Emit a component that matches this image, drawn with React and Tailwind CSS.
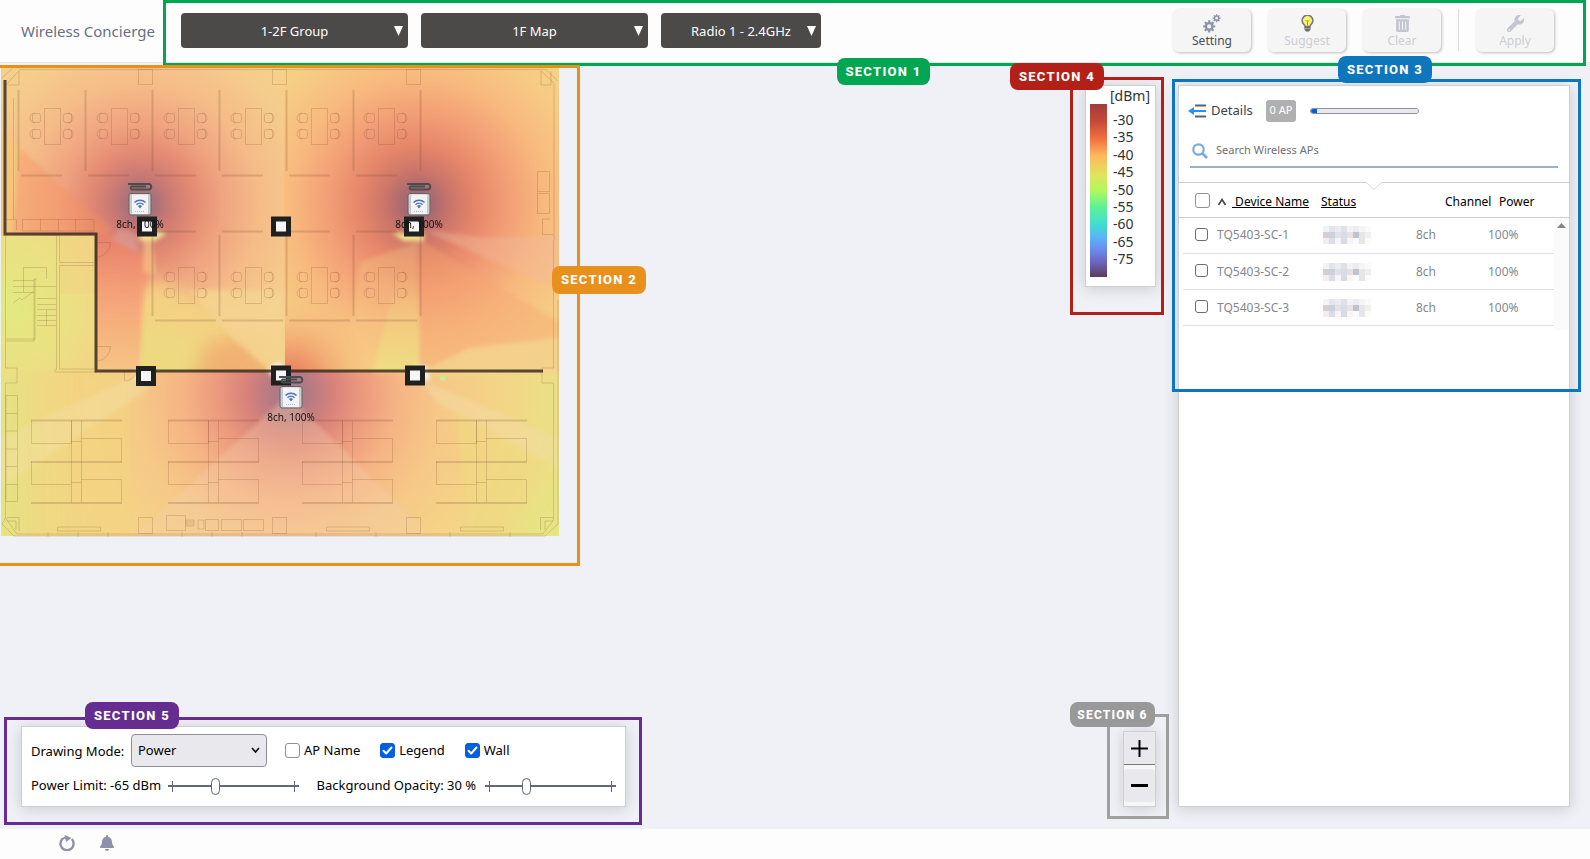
import { useState } from 'react';
import { FaBell, FaTrashAlt, FaWrench } from 'react-icons/fa';

const PANEL = 'bg-white border border-[#cfcfd2] shadow-[0_2px_14px_rgba(0,0,0,0.16)]';

const AP_ROWS = [
  { name: 'TQ5403-SC-1', channel: '8ch', power: '100%' },
  { name: 'TQ5403-SC-2', channel: '8ch', power: '100%' },
  { name: 'TQ5403-SC-3', channel: '8ch', power: '100%' },
];

const LEVELS = [-30, -35, -40, -45, -50, -55, -60, -65, -75];

const MOSAIC = [
  '#eef5f8', '#e4e5ea', '#ececf0', '#dfe1e8', '#f3f3f5', '#ececee', '#f5f5f7', '#fafafa',
  '#d6cfd2', '#cdd0da', '#e0e2ea', '#d8dce8', '#e8e0e3', '#c0c2cf', '#e4e6ea', '#efefec',
  '#f3edf0', '#d9dde9', '#f8f4f3', '#d8dbe6', '#faf3f2', '#f8fcff', '#e6e6e9', '#fdfdf8',
];

function Callout({ className, labelClass, children }) {
  return (
    <div className={`absolute pointer-events-none border-3 ${className}`}>
      <span className={`absolute flex items-center justify-center rounded-lg font-['Roboto',sans-serif] font-extrabold tracking-widest whitespace-nowrap text-white ${labelClass}`}>
        {children}
      </span>
    </div>
  );
}

function HeaderSelect({ label, value, className }) {
  return (
    <div className={`relative ${className}`}>
      <select aria-label={label} className="block w-full h-[35px] appearance-none rounded-sm bg-[#4b4a48] pt-[2px] text-center text-[13px] text-white">
        <option>{value}</option>
      </select>
      <svg className="absolute right-[5px] top-[13px] w-[9px] h-[10px] pointer-events-none" viewBox="0 0 9 10">
        <path d="M0 0h9L4.500 10z" fill="#fff" />
      </svg>
    </div>
  );
}

function ToolButton({ icon, children, disabled }) {
  return (
    <button
      type="button"
      disabled={disabled}
      className={`flex flex-col items-center w-[78px] h-[43px] pt-1 rounded-md bg-[#f5f5f5] shadow-[1px_1px_3px_rgba(0,0,0,0.25)] text-xs ${disabled ? 'text-[#cdced3]' : 'text-[#4a4e5a]'}`}
    >
      <span className="flex items-center h-5">{icon}</span>
      <span className="leading-4">{children}</span>
    </button>
  );
}

function gearPath(cx, cy, r, teeth) {
  const pts = [];
  const step = (Math.PI * 2) / teeth;
  for (let i = 0; i < teeth; i++) {
    const a = i * step;
    [[-0.34, 0.72], [-0.2, 1], [0.2, 1], [0.34, 0.72]].forEach(([t, k]) => {
      pts.push(`${(cx + Math.cos(a + t * step) * r * k).toFixed(2)} ${(cy + Math.sin(a + t * step) * r * k).toFixed(2)}`);
    });
  }
  const h = r * 0.34;
  return `M${pts.join('L')}ZM${cx - h} ${cy}a${h} ${h} 0 1 0 ${h * 2} 0a${h} ${h} 0 1 0 ${-h * 2} 0Z`;
}

function GearsIcon() {
  return (
    <svg width="18" height="19" viewBox="0 0 18 19" fill="#8f93a8" fillRule="evenodd">
      <path d={gearPath(6.2, 12.4, 6.2, 8)} />
      <path d={gearPath(13.6, 4.2, 4, 8)} />
    </svg>
  );
}

function BulbIcon() {
  return (
    <svg width="13" height="17" viewBox="0 0 13 17" fill="none">
      <path d="M4 11.500c0-2-2.900-2.800-2.900-6A5.400 5.200 0 0 1 11.900 5.500c0 3.200-2.900 4-2.900 6z" fill="#fbf56a" stroke="#77787c" strokeWidth="1.600" />
      <path d="M4.500 5l1.200 1.200L6.500 5.400l.8.8L8.500 5M6.500 6.500v4" stroke="#a09a3c" />
      <path d="M3.500 12h6v2.500L8 16.500H5l-1.500-2z" fill="#66676b" />
      <path d="M4 13.700h5" stroke="#ddd" strokeWidth=".6" />
    </svg>
  );
}

function Checkbox({ label, defaultChecked, size = 'size-[15px]', border = 'border-[#8f8f9d]' }) {
  return (
    <span className={`relative inline-block shrink-0 ${size}`}>
      <input
        type="checkbox"
        aria-label={label}
        defaultChecked={defaultChecked}
        className={`peer block size-full appearance-none rounded-[3px] border bg-white checked:border-[#0060df] checked:bg-[#0060df] ${border}`}
      />
      <svg className="absolute inset-0 hidden size-full pointer-events-none peer-checked:block" viewBox="0 0 15 15" fill="none">
        <path d="M3.500 7.800l2.700 2.700 5.300-6" stroke="#fff" strokeWidth="2" strokeLinecap="round" strokeLinejoin="round" />
      </svg>
    </span>
  );
}

function Slider({ id, min, max, value, onChange }) {
  return (
    <span className="relative flex items-center w-[131px] h-[18px] before:absolute before:left-[4px] before:top-[4px] before:h-[11px] before:w-px before:bg-[#63677a] after:absolute after:right-[4px] after:top-[4px] after:h-[11px] after:w-px after:bg-[#63677a]">
      <input
        id={id}
        type="range"
        min={min}
        max={max}
        value={value}
        onChange={(e) => onChange(Number(e.target.value))}
        className="relative z-10 w-full h-[17px] appearance-none bg-transparent [&::-webkit-slider-runnable-track]:h-[2px] [&::-webkit-slider-runnable-track]:bg-[#63677a] [&::-webkit-slider-thumb]:appearance-none [&::-webkit-slider-thumb]:-mt-[7px] [&::-webkit-slider-thumb]:h-[17px] [&::-webkit-slider-thumb]:w-[9px] [&::-webkit-slider-thumb]:rounded-full [&::-webkit-slider-thumb]:border [&::-webkit-slider-thumb]:border-[#63677a] [&::-webkit-slider-thumb]:bg-white"
      />
    </span>
  );
}

function HeatLayer() {
  return (
    <>
      <defs>
        <radialGradient id="ap1" gradientUnits="userSpaceOnUse" cx="141" cy="204" r="215">
          <stop offset="0" stopColor="#957484" />
          <stop offset=".07" stopColor="#ab7279" />
          <stop offset=".14" stopColor="#cb7a73" />
          <stop offset=".25" stopColor="#e48b73" />
          <stop offset=".38" stopColor="#f0a480" />
          <stop offset=".55" stopColor="#f5bb88" />
          <stop offset=".75" stopColor="#f5cb8c" />
          <stop offset="1" stopColor="#f4d58a" />
        </radialGradient>
        <radialGradient id="ap2" gradientUnits="userSpaceOnUse" cx="418" cy="204" r="198">
          <stop offset="0" stopColor="#8d6a7c" />
          <stop offset=".08" stopColor="#a96a70" />
          <stop offset=".17" stopColor="#cc7569" />
          <stop offset=".3" stopColor="#e6876a" />
          <stop offset=".46" stopColor="#f39f76" />
          <stop offset=".64" stopColor="#f8b97e" />
          <stop offset=".82" stopColor="#f7c983" />
          <stop offset="1" stopColor="#f4d485" />
        </radialGradient>
        <radialGradient id="ap3" gradientUnits="userSpaceOnUse" cx="290" cy="393" r="260">
          <stop offset="0" stopColor="#9c7a90" />
          <stop offset=".08" stopColor="#b67a84" />
          <stop offset=".17" stopColor="#d8827a" />
          <stop offset=".28" stopColor="#ec9a7e" />
          <stop offset=".42" stopColor="#f6b584" />
          <stop offset=".58" stopColor="#f6c887" />
          <stop offset=".8" stopColor="#f4d486" />
          <stop offset="1" stopColor="#ebdf86" />
        </radialGradient>
        <radialGradient id="up3" gradientUnits="userSpaceOnUse" cx="288" cy="385" r="85">
          <stop offset="0" stopColor="#e2674f" />
          <stop offset=".4" stopColor="#ef8c66" stopOpacity=".75" />
          <stop offset="1" stopColor="#f8b57b" stopOpacity="0" />
        </radialGradient>
        <radialGradient id="room" gradientUnits="userSpaceOnUse" cx="5" cy="305" r="110">
          <stop offset="0" stopColor="#e2ea80" />
          <stop offset=".6" stopColor="#ebe083" />
          <stop offset="1" stopColor="#f2d583" />
        </radialGradient>
        <linearGradient id="leftEdge" x1="0" x2="1" y1="0" y2="0">
          <stop offset="0" stopColor="#e2e582" />
          <stop offset="1" stopColor="#f3d582" stopOpacity="0" />
        </linearGradient>
        <linearGradient id="strip" x1="0" x2="0" y1="0" y2="1">
          <stop offset="0" stopColor="#e9806a" />
          <stop offset=".5" stopColor="#f6a578" />
          <stop offset="1" stopColor="#f6c381" />
        </linearGradient>
        <linearGradient id="shade2" x1="0" x2="0" y1="0" y2="1">
          <stop offset="0" stopColor="#f0d283" stopOpacity="0" />
          <stop offset="1" stopColor="#eedc82" />
        </linearGradient>
        <filter id="soft" x="-10%" y="-10%" width="120%" height="120%">
          <feGaussianBlur stdDeviation="2" />
        </filter>
        <filter id="haze" x="-20%" y="-20%" width="140%" height="140%">
          <feGaussianBlur stdDeviation="9" />
        </filter>
        <clipPath id="floor"><rect x="1" y="67" width="558" height="469" /></clipPath>
        <clipPath id="hall"><rect x="139" y="240" width="147" height="132" /></clipPath>
      </defs>
      <g clipPath="url(#floor)">
        <rect x="0" y="65" width="286" height="310" fill="url(#ap1)" />
        <rect x="284" y="65" width="280" height="310" fill="url(#ap2)" />
        <rect x="0" y="372" width="560" height="168" fill="url(#ap3)" />
        <g clipPath="url(#hall)">
          <path d="M120 290L160 282L215 305L290 372V400H120Z" fill="#f3d283" filter="url(#haze)" />
          <path d="M120 320L170 325L215 350L225 390H120Z" fill="#ecdb80" opacity=".7" filter="url(#haze)" />
          <path d="M205 345L240 335L280 372V390H190Z" fill="#f09c68" opacity=".6" filter="url(#haze)" />
        </g>
        <g filter="url(#soft)">
          {/* shadows cast by walls and pillars */}
          <path d="M0 130L72 196L110 226L110 234H0Z" fill="#f6915f" opacity=".38" />
          <path d="M0 130L20 149L12 234H0Z" fill="#f3d582" opacity=".6" />
          <path d="M96 236H120L150 262L144 296L139 372H96Z" fill="url(#strip)" opacity=".85" />
          <path d="M190 290H284V372H272L228 334Z" fill="#f5d491" opacity=".85" />
          <path d="M138 238L143 232H162L166 234L155 241H142Z" fill="#f1e58c" />
          <path d="M144 240H152L156 275L143 272Z" fill="#f5c383" opacity=".7" />
          <path d="M120 228L136 234L138 252L112 240Z" fill="#d99a94" opacity=".7" />
          <path d="M392 233L424 234V241H404Z" fill="#f1e58c" />
          <path d="M360 262L418 242V372H345Z" fill="#f5cb81" opacity=".35" />
          <path d="M398 276H419V372H372Z" fill="url(#shade2)" />
          <path d="M420 240L559 322V372H420Z" fill="#f5a674" opacity=".4" />
          <path d="M420 372L470 348L559 338V375H420Z" fill="#f4d48d" opacity=".8" />
          <path d="M424 230L480 237L559 236V290L486 258Z" fill="#f1b899" opacity=".45" />
        </g>
        <rect x="285" y="300" width="95" height="72" fill="url(#up3)" />
        <rect x="0" y="236" width="95" height="138" fill="url(#room)" />
        <rect x="60" y="234" width="35" height="60" fill="#f2d283" opacity=".5" />
        <g filter="url(#soft)">
          <rect x="-10" y="373" width="139" height="170" fill="#f3d381" opacity=".7" />
          <rect x="-4" y="373" width="90" height="170" fill="url(#leftEdge)" />
          <path d="M288 395L129 540H435Z" fill="#f3cfae" opacity=".34" />
          <path d="M136 376L0 438V488L150 388Z" fill="#f1e0a2" opacity=".45" />
          <path d="M418 378L559 438V470L436 402Z" fill="#f3dba6" opacity=".5" />
          <path d="M455 410L470 540H560V470Z" fill="#f0d982" opacity=".6" />
        </g>
        <path d="M575 430L500 560H580Z" fill="#e5e584" opacity=".8" filter="url(#haze)" />
        <path d="M136 370h8v12h-8zM268 370l6-6 8-2v14h-10zM414 366h12l4 14h-8z" fill="#f4f5f5" filter="url(#soft)" />
        <circle cx="443" cy="378" r="3" fill="#c9eb91" />
      </g>
    </>
  );
}

const TABLES = [
  ...[44, 111, 178, 245, 311, 378].map((x) => [x, 108]),
  ...[178, 245, 311, 378].map((x) => [x, 267]),
];

function PlanLayer() {
  return (
    <g fill="none" stroke="#7a4a30" strokeOpacity=".22">
      <path d="M19 69.500H546L558 81M2 78L13 68M5.500 86L12 78L19 71V85H8M551 71V85H541V71L554 83V240M553.500 240V300M5.500 234V368H17V383H5.500V518L17 534H250M5.500 518L2 524L14 536H545L558 524V300M553.500 300V368H542V383H553.500V520L543 534H250" />
      <path d="M138.500 69.500h14v15h-14zM272.500 69.500h14v15h-14zM406.500 69.500h14v15h-14zM138.500 517.500h14v16h-14zM272.500 517.500h14v16h-14zM406.500 517.500h14v16h-14z" />
      <path d="M7 517.500H19V531M7 521H16V530M540.500 530V517.500H553M545 530V521H553" />
      <path d="M13.500 98V219M7 219.500H16.500V230M22.500 219.500H94V231H22.500ZM40.500 219V231M58.500 219V231M75.500 219V231" />
      {[18, 85, 152, 219, 286, 353, 420].map((x) => (
        <path key={x} d={`M${x}.500 90V171`} strokeWidth="2" />
      ))}
      {[152, 219, 286, 353, 420].map((x) => (
        <path key={x} d={`M${x}.500 235V316`} strokeWidth="2" />
      ))}
      {[21, 88, 155, 222, 289, 356].map((x) => (
        <path key={x} d={`M${x} 175.500h41`} strokeWidth="2" />
      ))}
      {[155, 222, 289, 356].map((x) => (
        <path key={x} d={`M${x} 231.500h41M${x} 320.500h61`} strokeWidth="2" />
      ))}
      {TABLES.map(([x, y]) => (
        <g key={`${x}-${y}`}>
          <rect x={x + 0.5} y={y + 0.5} width="16" height="36" />
          {[10, 26].map((dy) => (
            <g key={dy}>
              <path d={`M${x - 9} ${y + dy - 5}A5 5 0 0 0 ${x - 9} ${y + dy + 5}M${x + 24} ${y + dy - 5}A5 5 0 0 1 ${x + 24} ${y + dy + 5}`} />
              <rect x={x - 11.5} y={y + dy - 4.5} width="8" height="9" rx="2" />
              <rect x={x + 19.5} y={y + dy - 4.5} width="8" height="9" rx="2" />
            </g>
          ))}
        </g>
      ))}
      {[31, 168, 302, 436].map((x) => (
        <g key={x} transform={`translate(${x} 420.500)`}>
          <path d="M0 0H91M0 41.500H91M0 82.500H91" strokeWidth="2" />
          <path d="M.5 0V23H40.500V0V82M50.500 0V82M50 18H90.500V41M40 21H50M.5 41V64H40M50 59H90.500V82M40 62H50" />
        </g>
      ))}
      {/* cabinets along the walls */}
      <path d="M6 395.500H17.500V501.500H6ZM6 413.500H17M6 431H17M6 449H17M6 466.500H17M6 484.500H17M537.500 171.500h12v20h-12zM537.500 193.500h12v20h-12zM550 219H542.500V234.500H553" />
      <path d="M57.500 527h43v4h-43zM326.500 527h43v4h-43zM460.500 527h43v4h-43zM48 532V537M78 532V537M108 532V537M182 532V537M212 532V537M242 532V537M316 532V537M376 532V537M450 532V537M510 532V537" />
      {/* stairs and doors */}
      <path d="M23.500 292V267.500H46.500V279M35 279V339H6M37 279H34V341H6M13 280.500H34M13 286.500H56M13 292.500H34M37 298.500H56M37 304.500H56M37 309.500H56M37 315.500H56M37 320.500H56M37 325.500H56M46.500 310V326M13 303L20 298L22 300L34 291M56.500 236V370M59.500 236V262.500H94M94 265.500H59.500V369H94M55 369V372H96" />
      <path d="M96 242.500H110.500A15 15 0 0 1 98 257M96 346.500H110.500A15 15 0 0 1 98 361M124.500 371V381A12 12 0 0 0 136 373" />
      <path d="M166.500 515.500h19v15h-19zM186 520h8v6h-8zM186 522h8M186 524h8M198 520h6v9h-6zM205.500 519.500h13v11h-13zM221.500 519.500h20v11h-20zM243.500 519.500h20v11h-20z" />
    </g>
  );
}

function AccessPoint({ x, y, label }) {
  return (
    <g transform={`translate(${x} ${y})`}>
      <path d="M-12 -20H9.500A3 3 0 0 1 9.500 -14.500H-8.500A1.800 1.800 0 0 1 -8.500 -17.500H6" fill="none" stroke="#4a4d50" strokeWidth="2" />
      <rect x="-11" y="-10.500" width="22" height="21.500" rx="2" fill="#c9cacb" stroke="#626466" />
      <rect x="-8" y="-9.500" width="16" height="19.500" rx="1" fill="#f2f3f5" />
      <g fill="none" stroke="#4c71bd" strokeWidth="1.500">
        <path d="M-5.500 -1.500A8 8 0 0 1 5.500 -1.500M-3.500 .7A5 5 0 0 1 3.500 .7" />
      </g>
      <path d="M-2 2L0 4.500L2 2A3 3 0 0 0 -2 2Z" fill="#4c71bd" />
      <path d="M-5 7.500H5" stroke="#b5b5b5" strokeDasharray="1 1" />
      <text y="24" textAnchor="middle" fontSize="10" fill="#111">{label}</text>
    </g>
  );
}

function FloorMap() {
  const pillars = [[147, 226.5], [281, 226.5], [414, 226.5], [146, 376], [281, 375.5], [415, 375.5]];
  return (
    <svg className="block" width="560" height="475" viewBox="0 65 560 475" role="img" aria-label="1F Map">
      <HeatLayer />
      <PlanLayer />
      <path d="M5 80V234H96V371H543" fill="none" stroke="#1f1a12" strokeOpacity=".75" strokeWidth="3" />
      {pillars.map(([x, y]) => (
        <rect key={`${x}-${y}`} x={x - 7.5} y={y - 7.5} width="15" height="15" fill="#f6f6f8" stroke="#20201e" strokeWidth="5" />
      ))}
      <AccessPoint x={140} y={204} label="8ch, 100%" />
      <AccessPoint x={419} y={204} label="8ch, 100%" />
      <AccessPoint x={291} y={397} label="8ch, 100%" />
    </svg>
  );
}

function Header() {
  return (
    <header className="relative flex items-start h-[63px] border-b border-[#e4e4ea] bg-[#fdfdfd]">
      <h1 className="w-[181px] shrink-0 pl-[21px] pt-[19px] text-[15px] leading-6 whitespace-nowrap text-[#6a6f80]">Wireless Concierge</h1>
      <div className="flex gap-[13px] pt-[13px]">
        <HeaderSelect label="Group" value="1-2F Group" className="w-[227px]" />
        <HeaderSelect label="Map" value="1F Map" className="w-[227px]" />
        <HeaderSelect label="Radio" value="Radio 1 - 2.4GHz" className="w-40" />
      </div>
      <div className="ml-auto flex gap-[17px] pt-[9px] pr-9">
        <ToolButton icon={<GearsIcon />}>Setting</ToolButton>
        <ToolButton icon={<BulbIcon />} disabled>Suggest</ToolButton>
        <ToolButton icon={<FaTrashAlt size={17} color="#c3c5d1" />} disabled>Clear</ToolButton>
        <span className="w-px h-[42px] bg-[#dcdce0]" />
        <ToolButton icon={<FaWrench size={17} color="#c3c5d1" />} disabled>Apply</ToolButton>
      </div>
      <Callout className="left-[163px] right-1 top-0 h-[66px] border-[#00a651]" labelClass="left-[671px] top-[55px] w-[93px] h-[27px] text-[13px] bg-[#00a651]">SECTION 1</Callout>
    </header>
  );
}

function Legend() {
  return (
    <div className="relative">
      <div className={`flex w-[71px] h-[202px] pl-1 ${PANEL}`}>
        <div className="mt-[18px] w-[17px] h-[173px] bg-[linear-gradient(#a23c3c,#c44a36_10%,#f07040_20%,#fdb95e_30%,#dfe45c_41%,#b0fa5c_50%,#5cf09a_60%,#40e0cc_69%,#5ab4f8_77%,#6a8cf0_84%,#6c62b8_92%,#5c3c5a)]" />
        <div className="pt-[1px] text-[14px] leading-[17px] text-[#333]">
          <div className="h-6 pl-[3px]">[dBm]</div>
          <div className="flex flex-col justify-between h-[156px] pl-[6px]">
            {LEVELS.map((level) => (
              <span key={level}>{level}</span>
            ))}
          </div>
        </div>
      </div>
      <Callout className="-left-[15px] -right-2 -top-2 -bottom-7 border-[#b32017]" labelClass="-left-[63px] -top-[17px] w-[94px] h-[27px] text-[13px] bg-[#b32017]">SECTION 4</Callout>
    </div>
  );
}

function ZoomControls() {
  return (
    <div className="relative">
      <div className="w-[33px] border border-[#cfcfd2] bg-[#f6f6f6] pb-1 shadow-[0_2px_14px_rgba(0,0,0,0.16)]">
        <button type="button" aria-label="Zoom in" className="flex items-center justify-center w-full h-[33px] border-b border-[#777] bg-[#e9e9ed]">
          <svg width="17" height="17" viewBox="0 0 17 17"><path d="M0 8.500H17M8.500 0V17" stroke="#000" strokeWidth="2" /></svg>
        </button>
        <button type="button" aria-label="Zoom out" className="mt-1 flex items-center justify-center w-full h-[33px] rounded bg-[#e9e9ed]">
          <svg width="17" height="17" viewBox="0 0 17 17"><path d="M0 8.500H17" stroke="#000" strokeWidth="3" /></svg>
        </button>
      </div>
      <Callout className="-left-4 -right-[13px] -top-[17px] -bottom-3 border-[#a0a0a0]" labelClass="-left-10 -top-[15px] w-[85px] h-[25px] text-xs bg-[#999]">SECTION 6</Callout>
    </div>
  );
}

function DrawingOptions() {
  const [limit, setLimit] = useState(-65);
  const [opacity, setOpacity] = useState(30);
  return (
    <div className="relative ml-[21px] self-start">
      <div className={`flex flex-col w-[605px] h-[81px] px-[9px] pt-[7px] text-[13px] text-black ${PANEL}`}>
        <div className="flex items-center">
          <label htmlFor="mode" className="w-[100px] pt-[2px] whitespace-nowrap">Drawing Mode:</label>
          <div className="relative w-[136px]">
            <select id="mode" className="block w-full h-[33px] appearance-none rounded border border-[#8f8f9d] bg-[#e9e9ed] pl-[6px]">
              <option>Power</option>
            </select>
            <svg className="absolute right-[7px] top-[13px] pointer-events-none" width="9" height="7" viewBox="0 0 9 7" fill="none">
              <path d="M1 1l3.500 4L8 1" stroke="#111" strokeWidth="1.600" />
            </svg>
          </div>
          <div className="ml-[18px] flex gap-5">
            <label className="flex items-center gap-1"><Checkbox />AP Name</label>
            <label className="flex items-center gap-1"><Checkbox defaultChecked />Legend</label>
            <label className="flex items-center gap-1"><Checkbox defaultChecked />Wall</label>
          </div>
        </div>
        <div className="mt-[9px] flex items-center">
          <label htmlFor="limit" className="w-[137px] whitespace-nowrap">Power Limit: {limit} dBm</label>
          <Slider id="limit" min={-90} max={-20} value={limit} onChange={setLimit} />
          <label htmlFor="opacity" className="ml-[18px] w-[169px] whitespace-nowrap">Background Opacity: {opacity} %</label>
          <Slider id="opacity" min={0} max={100} value={opacity} onChange={setOpacity} />
        </div>
      </div>
      <Callout className="-left-[17px] -right-4 -top-[9px] -bottom-[18px] border-[#662d91]" labelClass="left-[78px] -top-[18px] w-[94px] h-[27px] text-[13px] bg-[#662d91]">SECTION 5</Callout>
    </div>
  );
}

function StatusMosaic() {
  return (
    <div className="grid grid-cols-8 w-12 h-[18px]">
      {MOSAIC.map((color, i) => (
        <span key={i} style={{ backgroundColor: color }} />
      ))}
    </div>
  );
}

function DetailsPanel() {
  return (
    <aside className="relative w-[392px] shrink-0 mt-5 mb-[22px] mr-5">
      <div className={`h-full ${PANEL}`}>
        <div className="flex items-center h-[49px] pl-[9px] text-[13px] text-[#3b3f4a]">
          <svg width="18" height="14" viewBox="0 0 18 14" fill="none">
            <path d="M7 1.500H18M7 12.500H18" stroke="#5b6070" strokeWidth="2" />
            <path d="M5 7H18" stroke="#2492f5" strokeWidth="2" />
            <path d="M0 7L6 3V11Z" fill="#2492f5" />
          </svg>
          <span className="ml-[5px] w-[55px]">Details</span>
          <span className="flex items-center justify-center w-[30px] h-[22px] rounded-[3px] bg-[#b0b0b0] text-[11px] text-white">0 AP</span>
          <progress
            aria-label="Scan progress"
            value="6"
            max="109"
            className="ml-[14px] w-[109px] h-[6px] appearance-none overflow-hidden rounded-full border border-[#8f8f9d] [&::-webkit-progress-bar]:bg-[#e9e9ed] [&::-webkit-progress-value]:bg-[#0060df]"
          />
        </div>
        <div className="mx-[11px] mb-[14px] flex items-center h-[33px] border-b-2 border-[#9db1c5]">
          <svg className="ml-[2px]" width="16" height="16" viewBox="0 0 16 16" fill="none">
            <circle cx="6.500" cy="6.500" r="5.200" stroke="#7aa9dc" strokeWidth="2.200" />
            <path d="M10.500 10.500L15 15" stroke="#7aa9dc" strokeWidth="2.600" />
          </svg>
          <input type="search" aria-label="Search Wireless APs" placeholder="Search Wireless APs" className="ml-2 flex-1 text-[11px] outline-none placeholder:text-[#6f6f74]" />
        </div>
        <div className="relative border-t border-[#cfcfd2]">
          <svg className="absolute left-[187px] -top-px" width="16" height="9" viewBox="0 0 16 9">
            <path d="M0 0H16L8 8Z" fill="#fff" />
            <path d="M.5 .5L8 7.500L15.500 .5" fill="none" stroke="#d8d8dc" />
          </svg>
          <table className="w-full table-fixed border-b border-[#cfcfd2] text-xs text-black">
            <thead>
              <tr className="h-[34px] text-left whitespace-nowrap [&>th]:pt-1 [&>th]:font-normal">
                <th className="w-[38px] pl-4 leading-none"><Checkbox label="Select all" /></th>
                <th className="w-[104px]">
                  <span className="flex items-center">
                    <svg width="10" height="8" viewBox="0 0 10 8" fill="none"><path d="M1.500 7L5 1.500L8.500 7" stroke="#444" strokeWidth="1.600" /></svg>
                    <a href="#name" className="ml-[5px] underline whitespace-pre"> Device Name</a>
                  </span>
                </th>
                <th className="w-[124px]"><a href="#status" className="underline">Status</a></th>
                <th className="w-[54px]">Channel</th>
                <th>Power</th>
              </tr>
            </thead>
          </table>
          <div className="flex">
            <table aria-label="Wireless APs" className="ml-1 flex-1 table-fixed self-start text-xs text-[#85878f]">
              <tbody>
                {AP_ROWS.map((row) => (
                  <tr key={row.name} className="h-9 border-b border-[#dfe3e8]">
                    <td className="w-[34px] pl-3 leading-none"><Checkbox label={row.name} size="size-[13px]" border="border-[#6b6b72]" /></td>
                    <td className="w-[106px]">{row.name}</td>
                    <td className="w-[93px]"><StatusMosaic /></td>
                    <td className="w-[72px]">{row.channel}</td>
                    <td>{row.power}</td>
                  </tr>
                ))}
              </tbody>
            </table>
            <div className="w-[15px] h-[112px] bg-[#fbfbfb] pt-[5px] pl-[3px]">
              <svg width="9" height="5" viewBox="0 0 9 5"><path d="M0 5L4.500 0L9 5Z" fill="#858588" /></svg>
            </div>
          </div>
        </div>
      </div>
      <Callout className="-left-[6px] -right-[11px] -top-[6px] h-[313px] border-[#0e76bc]" labelClass="left-[163px] -top-[26px] w-[94px] h-[27px] text-[13px] bg-[#0e76bc]">SECTION 3</Callout>
    </aside>
  );
}

function Footer() {
  return (
    <footer className="flex h-[30px] items-center gap-6 bg-[#fdfdfd] pl-[59px] pb-[2px] text-[#8d92aa]">
      <button type="button" aria-label="Refresh">
        <svg className="block" width="16" height="16" viewBox="0 0 16 16" fill="none">
          <path d="M3.400 3.800A6.600 6.600 0 1 0 12.800 4" stroke="currentColor" strokeWidth="2.400" />
          <path d="M5.500 0L12.500 3L7 7Z" fill="currentColor" />
          <path d="M3.200 4.200Q5 2.500 8 2.600" stroke="currentColor" strokeWidth="2" />
        </svg>
      </button>
      <button type="button" aria-label="Notifications"><FaBell className="block" size={16} /></button>
    </footer>
  );
}

export default function App() {
  return (
    <div className="flex flex-col min-h-screen overflow-hidden bg-[#f0f1f6] font-['Noto_Sans','Open_Sans',sans-serif]">
      <Header />
      <main className="relative z-10 flex flex-1 pt-[2px]">
        <div className="flex flex-1 flex-col justify-between pb-[22px]">
          <div className="relative self-start">
            <FloorMap />
            <Callout className="left-0 -right-5 top-0 h-[501px] border-l-0 border-[#e8901c]" labelClass="left-[552px] top-[198px] w-[94px] h-7 text-[13px] bg-[#e8901c]">SECTION 2</Callout>
          </div>
          <DrawingOptions />
        </div>
        <div className="flex flex-col items-end justify-between pt-5 pb-[22px] mr-[22px]">
          <Legend />
          <ZoomControls />
        </div>
        <DetailsPanel />
      </main>
      <Footer />
    </div>
  );
}
